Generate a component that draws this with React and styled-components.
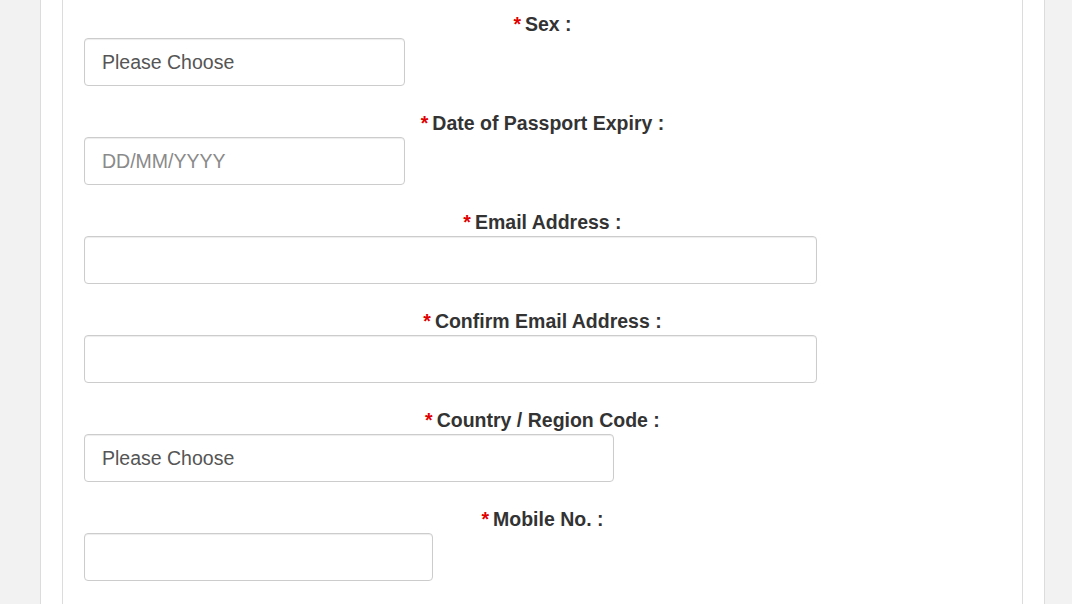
import React from "react";
import styled, { createGlobalStyle } from "styled-components";

const GlobalStyle = createGlobalStyle`
  html, body {
    margin: 0;
    padding: 0;
    background: #f2f2f2;
    font-family: "Liberation Sans", Arial, sans-serif;
  }
`;

const fields = [
  { label: "Sex", width: 321, value: "Please Choose" },
  { label: "Date of Passport Expiry", width: 321, placeholder: "DD/MM/YYYY" },
  { label: "Email Address", width: 733 },
  { label: "Confirm Email Address", width: 733 },
  { label: "Country / Region Code", width: 530, value: "Please Choose" },
  { label: "Mobile No.", width: 349 },
];

export default function App() {
  return (
    <>
      <GlobalStyle />
      <Page>
        <Panel>
          <Card>
            {fields.map((f) => (
              <Group key={f.label}>
                <Label>
                  <Star>*</Star>
                  {f.label} :
                </Label>
                <Field
                  $width={f.width}
                  type="text"
                  readOnly
                  value={f.value || ""}
                  placeholder={f.placeholder}
                />
              </Group>
            ))}
          </Card>
        </Panel>
      </Page>
    </>
  );
}

const Page = styled.div`
  height: 604px;
  overflow: hidden;
  padding-left: 40px;
  width: 1005px;
`;

const Panel = styled.div`
  height: 100%;
  background: #fff;
  border-left: 1px solid #dcdcdc;
  border-right: 1px solid #dcdcdc;
  padding: 0 21px;
`;

const Card = styled.div`
  height: 100%;
  border-left: 1px solid #dcdcdc;
  border-right: 1px solid #dcdcdc;
  padding: 11px 21px 0;
  box-sizing: border-box;
`;

const Group = styled.div`
  margin-bottom: 24px;
`;

const Label = styled.label`
  display: block;
  text-align: center;
  font-size: 19.5px;
  line-height: 24px;
  height: 24px;
  padding-top: 1px;
  font-weight: bold;
  color: #333;
  margin-bottom: 2px;
`;

const Star = styled.span`
  color: #e00000;
  margin-right: 4px;
`;

const Field = styled.input`
  display: block;
  box-sizing: border-box;
  width: ${(p) => p.$width}px;
  height: 48px;
  padding: 0 17px;
  border: 1px solid #cccccc;
  border-radius: 4px;
  box-shadow: inset 0 1px 1px rgba(0, 0, 0, 0.075);
  font-family: "Liberation Sans", Arial, sans-serif;
  font-size: 19.5px;
  color: #555;
  background: #fff;
  outline: none;
  &::placeholder {
    color: #8a8a8a;
  }
`;
